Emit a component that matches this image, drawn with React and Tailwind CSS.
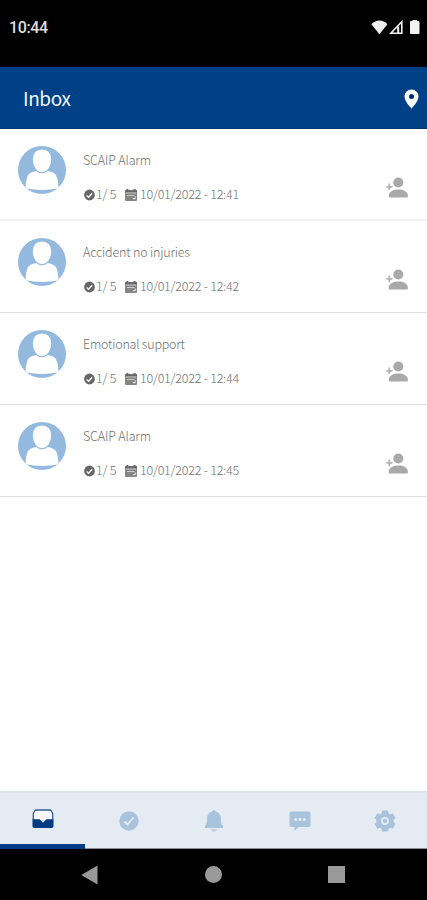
import React from 'react';

const alarms = [
    { id: 1, title: 'SCAIP Alarm', titleWidth: 68, date: '10/01/2022 - 12:41' },
    { id: 2, title: 'Accident no injuries', titleWidth: 107, date: '10/01/2022 - 12:42' },
    { id: 3, title: 'Emotional support', titleWidth: 102, date: '10/01/2022 - 12:44' },
    { id: 4, title: 'SCAIP Alarm', titleWidth: 68, date: '10/01/2022 - 12:45' },
];

function StatusBar() {
    return (
        <div className="h-[67px] shrink-0 bg-black flex items-start justify-between pl-[9px] pr-[7px] pt-[19px]">
            <span className="font-['Roboto',sans-serif] font-medium text-[16px] leading-[18px] tracking-[-0.4px] text-[#dedede]">10:44</span>
            <div className="flex items-center gap-[1px] text-[#f2f2f2]">
                <svg width="17" height="16" viewBox="0 0 17 16" fill="currentColor">
                    <path d="M0.4 5.2C5 0.3 12 0.3 16.4 5.2L8.4 15.2Z" />
                </svg>
                <svg width="15" height="16" viewBox="0 0 15 16" fill="none" stroke="currentColor" strokeWidth="1.6">
                    <path d="M12.8 2.8V14.2H1.8Z" />
                    <path d="M9.200 7.500V14" strokeWidth="2" />
                </svg>
                <svg className="ml-[5px]" width="10" height="16" viewBox="0 0 10 16" fill="currentColor">
                    <path d="M2.5 1h4.500v1h1.500a1 1 0 0 1 1 1V14a1 1 0 0 1-1 1H1a1 1 0 0 1-1-1V3a1 1 0 0 1 1-1h1.500Z" />
                </svg>
            </div>
        </div>
    );
}

function Header() {
    return (
        <header className="h-[62px] shrink-0 bg-[#004086] border-b border-[#00306f] flex items-center justify-between pl-[23px] pr-[8px]">
            <h1 className="text-[19px] leading-[28px] tracking-[-0.4px] text-[#f3f7fc] pt-px">Inbox</h1>
            <svg className="mt-[2px]" width="15" height="20" viewBox="0 0 15 20">
                <path d="M7.5 0.5a7 7 0 0 0-7 7C0.5 12.5 7.5 19.5 7.5 19.5s7-7 7-12a7 7 0 0 0-7-7Z" fill="#fff" />
                <circle cx="7.5" cy="7.4" r="2.5" fill="#00277a" />
            </svg>
        </header>
    );
}

function Avatar() {
    return (
        <svg className="shrink-0" width="48" height="48" viewBox="0 0 48 48">
            <circle cx="24" cy="24" r="24" fill="#93b9de" />
            <path d="M7.600 42.300C7.600 37 8.600 31 10.600 28.500c1.800-2.200 5.400-3.300 9-3.700h8.800c3.600.4 7.200 1.500 9 3.700 2 2.500 3 8.500 3 13.800Q24 45.500 7.600 42.300Z" fill="#fff" />
            <path d="M24 2.800c-6 0-9.800 4-9.800 10.600 0 7.600 4.400 13.200 9.800 13.200s9.800-5.600 9.800-13.200c0-6.600-3.800-10.600-9.800-10.600Z" fill="#fff" stroke="#93b9de" strokeWidth="1.200" />
        </svg>
    );
}

function CheckBadge() {
    return (
        <svg width="11" height="12" viewBox="0 0 11 12">
            <circle cx="5.500" cy="6" r="5.400" fill="#666" />
            <path d="M2.700 6.400l1.900 1.800 3.600-3.900" fill="none" stroke="#f5f5f5" strokeWidth="1.400" />
        </svg>
    );
}

function Calendar() {
    return (
        <svg width="12" height="12" viewBox="0 0 12 12">
            <path d="M0 1.200h1.600V0h1.600v1.200h5.600V0h1.600v1.200H12V11a1 1 0 0 1-1 1H1a1 1 0 0 1-1-1Z" fill="#858585" />
            <path d="M0 1.200h1.600V0h1.600v1.200h5.600V0h1.600v1.200H12v2.100H0Z" fill="#666" />
            <path d="M1 4h10M2 6.500h7.500" stroke="#d0d0d0" strokeWidth="0.900" />
            <path d="M7.800 9.700h2.400V7.500" fill="none" stroke="#e8e8e8" strokeWidth="1" />
        </svg>
    );
}

function AddPerson() {
    return (
        <svg width="22" height="22" viewBox="0 0 22 22" fill="#a9a9a9">
            <circle cx="12.300" cy="5.500" r="5" />
            <path d="M2.800 20.500v-2.300c0-3.700 5.200-5.700 9.600-5.700s9.400 2 9.400 5.700v2.300Z" />
            <path d="M3.300 6.500v6.600M0.200 9.800h6.200" stroke="#b2b2b2" strokeWidth="1.700" />
        </svg>
    );
}

function AlarmRow({ alarm }) {
    return (
        <li className="h-[92px] flex items-start pl-[18px] pr-[19px] pt-[17px] border-b border-[#dedede] first:border-b-2 first:border-[#f2f2f2] text-[#707070] font-light">
            <Avatar />
            <div className="ml-[17px] flex-1 pt-[5px]">
                <svg className="block overflow-visible" width={alarm.titleWidth} height="20">
                    <text x="0" y="14" fontSize="12.5" fill="currentColor" textLength={alarm.titleWidth}>{alarm.title}</text>
                </svg>
                <div className="flex items-center h-[20px] mt-[14px] ml-[1px] text-[12.500px] leading-[20px] tracking-[-0.22px]">
                    <CheckBadge />
                    <span className="ml-[1px] w-[29px] whitespace-nowrap -mt-[2px]">1/ 5</span>
                    <Calendar />
                    <span className="ml-[3px] whitespace-nowrap -mt-[2px]">{alarm.date}</span>
                </div>
            </div>
            <div className="pt-[31px]">
                <AddPerson />
            </div>
        </li>
    );
}

function InboxIcon() {
    return (
        <svg width="22" height="20" viewBox="0 0 22 20">
            <path d="M1.300 11V4.500L2.600 2Q3.200 1 4.400 1h13.200q1.200 0 1.800 1l1.300 2.500V11" fill="#f4f7fb" stroke="#315a98" strokeWidth="1.300" />
            <path d="M0.500 10.300h6.300c1 0 1.500.4 2 1.200l2.200 2.300 2.200-2.300c.5-.8 1-1.200 2-1.200h6.300V17a2 2 0 0 1-2 2h-17a2 2 0 0 1-2-2Z" fill="#003b86" />
        </svg>
    );
}

function DoneIcon() {
    return (
        <svg width="20" height="20" viewBox="0 0 20 20">
            <circle cx="10" cy="10" r="9.700" fill="#aac3dc" />
            <path d="M5.500 10.500l3 3 6-7" fill="none" stroke="#e5ebf3" strokeWidth="1.800" />
        </svg>
    );
}

function BellIcon() {
    return (
        <svg width="20" height="22" viewBox="0 0 20 22" fill="#aac3dc">
            <path d="M8.700 1.300a1.300 1.300 0 0 1 2.600 0c3.400 1 5.600 3.600 5.600 7 0 4.200.6 6.300 2.200 7.700V18H.9v-2c1.600-1.400 2.200-3.500 2.200-7.700 0-3.400 2.200-6 5.600-7Z" />
            <path d="M7.300 19h5.400a2.700 2.700 0 0 1-5.400 0Z" fill="#c3d0dc" />
        </svg>
    );
}

function ChatIcon() {
    return (
        <svg width="22" height="20" viewBox="0 0 22 20">
            <path d="M2.500.5h17a2 2 0 0 1 2 2V14a2 2 0 0 1-2 2H10l-4.500 3.700V16h-3a2 2 0 0 1-2-2V2.500a2 2 0 0 1 2-2Z" fill="#aac3dc" />
            <path d="M5.500 7.300h2.400v2.400H5.500ZM9.800 7.300h2.400v2.400H9.800ZM14.100 7.300h2.400v2.400h-2.400Z" fill="#f0f5fa" />
        </svg>
    );
}

function GearIcon() {
    return (
        <svg width="22" height="22" viewBox="0 0 22 22">
            <circle cx="11" cy="11" r="8.600" fill="#aac3dc" />
            <path d="M8 .4h6l.4 3 1.600.9 2.700-1.100 2.900 5-2.400 1.900v1.800l2.400 1.900-2.900 5-2.700-1.100-1.600.9-.4 3H8l-.4-3-1.600-.9-2.700 1.100-2.900-5 2.400-1.900v-1.800L.4 8.200l2.900-5L6 4.300l1.600-.9Z" fill="#aac3dc" />
            <circle cx="11" cy="11" r="3.100" fill="none" stroke="#e5edf5" strokeWidth="1.700" />
        </svg>
    );
}

const tabs = [
    { name: 'inbox', Icon: InboxIcon },
    { name: 'done', Icon: DoneIcon },
    { name: 'alerts', Icon: BellIcon },
    { name: 'chat', Icon: ChatIcon },
    { name: 'settings', Icon: GearIcon },
];

function TabBar() {
    return (
        <nav className="h-[58px] shrink-0 grid grid-cols-5 bg-[#e5ebf3] border-t-2 border-[#dce1e5]">
            {tabs.map(({ name, Icon }) => (
                <div
                    key={name}
                    className={name === 'inbox'
                        ? 'flex justify-center items-center pt-px border-b-[5px] border-[#003b86]'
                        : 'flex justify-center items-center pl-[2px] pt-px border-b border-[#8b9096]'}
                >
                    <Icon />
                </div>
            ))}
        </nav>
    );
}

function SystemNav() {
    return (
        <div className="h-[51px] shrink-0 bg-black flex items-center justify-between pl-[81px] pr-[82px]">
            <svg width="17" height="20" viewBox="0 0 17 20">
                <path d="M0.300 10L16.500 0.500v19Z" fill="#999" />
            </svg>
            <div className="size-[17px] rounded-full bg-[#999]" />
            <div className="size-[17px] bg-[#999]" />
        </div>
    );
}

export default function App() {
    return (
        <div className="w-[427px] h-[900px] flex flex-col overflow-hidden bg-white font-['Noto_Sans_CJK_JP',sans-serif]">
            <StatusBar />
            <Header />
            <ul className="flex-1">
                {alarms.map((alarm) => (
                    <AlarmRow key={alarm.id} alarm={alarm} />
                ))}
            </ul>
            <TabBar />
            <SystemNav />
        </div>
    );
}
